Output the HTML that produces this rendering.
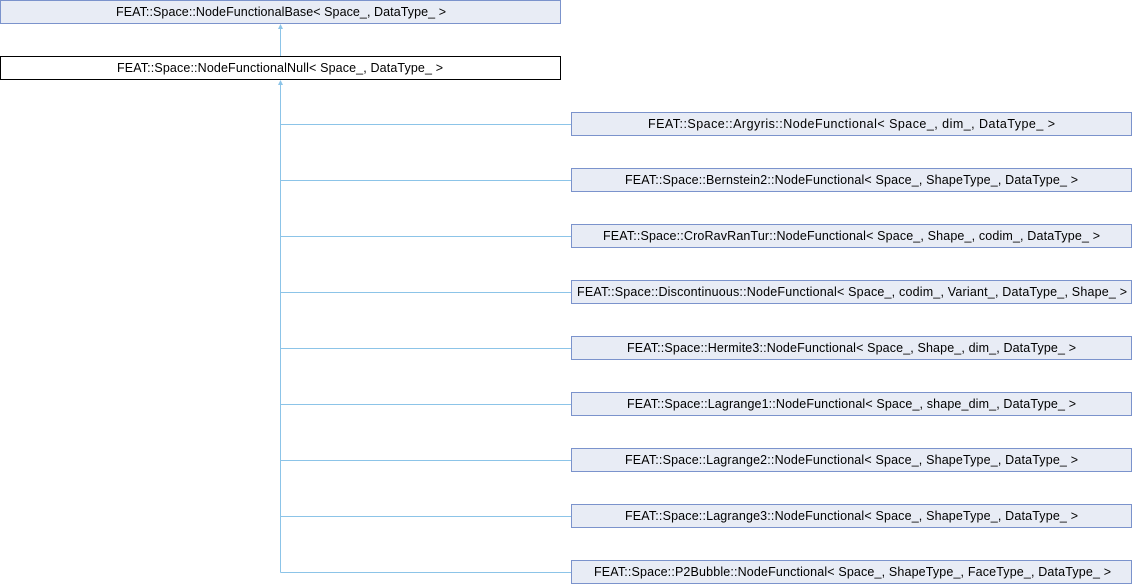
<!DOCTYPE html>
<html><head><meta charset="utf-8"><style>
html,body{margin:0;padding:0;background:#fff;width:1132px;height:584px;overflow:hidden}
svg text{font-family:"Liberation Sans",Arial,sans-serif;font-size:12.5px;fill:#000}
</style></head><body>
<svg width="1132" height="584" xmlns="http://www.w3.org/2000/svg">
<g stroke="#8cc4e8" stroke-width="1" fill="none">
<line x1="280.5" y1="26" x2="280.5" y2="56"/>
<line x1="280.5" y1="82" x2="280.5" y2="572.5"/>
<line x1="280.5" y1="124.5" x2="571" y2="124.5"/>
<line x1="280.5" y1="180.5" x2="571" y2="180.5"/>
<line x1="280.5" y1="236.5" x2="571" y2="236.5"/>
<line x1="280.5" y1="292.5" x2="571" y2="292.5"/>
<line x1="280.5" y1="348.5" x2="571" y2="348.5"/>
<line x1="280.5" y1="404.5" x2="571" y2="404.5"/>
<line x1="280.5" y1="460.5" x2="571" y2="460.5"/>
<line x1="280.5" y1="516.5" x2="571" y2="516.5"/>
<line x1="280.5" y1="572.5" x2="571" y2="572.5"/>
</g>
<g fill="#8cc4e8"><polygon points="280.5,24 278,29 283,29"/><polygon points="280.5,80 278,85 283,85"/></g>
<rect x="0.5" y="0.5" width="560" height="23" fill="#e8ecf5" stroke="#7b93cc"/>
<text x="116" y="16" textLength="330" lengthAdjust="spacing">FEAT::Space::NodeFunctionalBase&lt; Space_, DataType_ &gt;</text>
<rect x="0.5" y="56.5" width="560" height="23" fill="#fff" stroke="#000"/>
<text x="117" y="72" textLength="326" lengthAdjust="spacing">FEAT::Space::NodeFunctionalNull&lt; Space_, DataType_ &gt;</text>
<g fill="#e8ecf5" stroke="#7b93cc">
<rect x="571.5" y="112.5" width="560" height="23"/>
<rect x="571.5" y="168.5" width="560" height="23"/>
<rect x="571.5" y="224.5" width="560" height="23"/>
<rect x="571.5" y="280.5" width="560" height="23"/>
<rect x="571.5" y="336.5" width="560" height="23"/>
<rect x="571.5" y="392.5" width="560" height="23"/>
<rect x="571.5" y="448.5" width="560" height="23"/>
<rect x="571.5" y="504.5" width="560" height="23"/>
<rect x="571.5" y="560.5" width="560" height="23"/>
</g>
<g lengthAdjust="spacing">
<text x="648" y="128" textLength="407" lengthAdjust="spacing">FEAT::Space::Argyris::NodeFunctional&lt; Space_, dim_, DataType_ &gt;</text>
<text x="625" y="184" textLength="453" lengthAdjust="spacing">FEAT::Space::Bernstein2::NodeFunctional&lt; Space_, ShapeType_, DataType_ &gt;</text>
<text x="603" y="240" textLength="497" lengthAdjust="spacing">FEAT::Space::CroRavRanTur::NodeFunctional&lt; Space_, Shape_, codim_, DataType_ &gt;</text>
<text x="577" y="296" textLength="550" lengthAdjust="spacing">FEAT::Space::Discontinuous::NodeFunctional&lt; Space_, codim_, Variant_, DataType_, Shape_ &gt;</text>
<text x="627" y="352" textLength="449" lengthAdjust="spacing">FEAT::Space::Hermite3::NodeFunctional&lt; Space_, Shape_, dim_, DataType_ &gt;</text>
<text x="627" y="408" textLength="449" lengthAdjust="spacing">FEAT::Space::Lagrange1::NodeFunctional&lt; Space_, shape_dim_, DataType_ &gt;</text>
<text x="625" y="464" textLength="453" lengthAdjust="spacing">FEAT::Space::Lagrange2::NodeFunctional&lt; Space_, ShapeType_, DataType_ &gt;</text>
<text x="625" y="520" textLength="453" lengthAdjust="spacing">FEAT::Space::Lagrange3::NodeFunctional&lt; Space_, ShapeType_, DataType_ &gt;</text>
<text x="594" y="576" textLength="517" lengthAdjust="spacing">FEAT::Space::P2Bubble::NodeFunctional&lt; Space_, ShapeType_, FaceType_, DataType_ &gt;</text>
</g>
</svg>
</body></html>
